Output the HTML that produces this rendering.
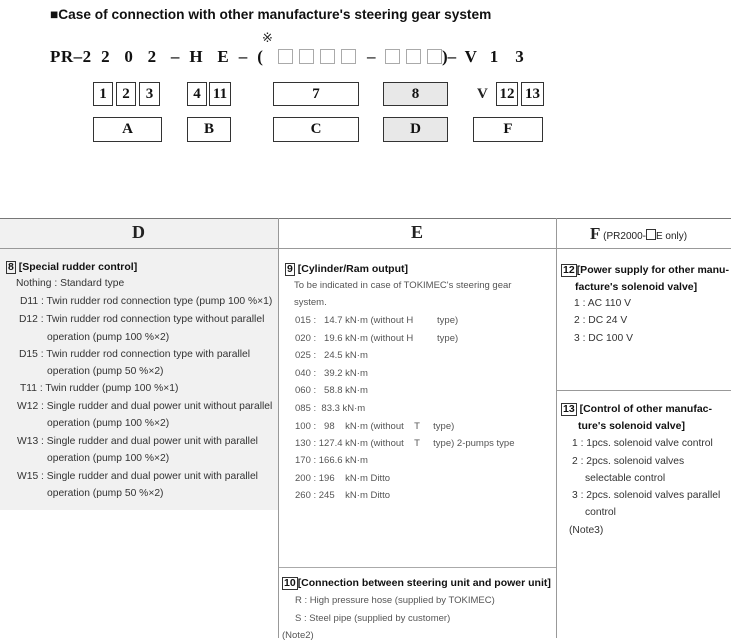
<!DOCTYPE html><html><head><meta charset="utf-8"><style>
body{margin:0;width:731px;height:638px;background:#fff;position:relative;overflow:hidden;font-family:"Liberation Sans",sans-serif;color:#222}
.a{position:absolute;white-space:nowrap}
.bx{position:absolute;border:1.5px solid #333;box-sizing:border-box;text-align:center;font-family:"Liberation Serif",serif;font-weight:bold;font-size:15px;color:#111}
.g{background:#e8e8e8}
.t{position:absolute;white-space:nowrap;font-size:10.3px;color:#333}
.b{font-weight:bold;font-size:10.5px;color:#111}
.n{display:inline-block;border:1px solid #333;padding:0 1px;font-weight:bold;line-height:11px}
.e{color:#555;font-size:9.5px}
.sq{position:absolute;top:49px;width:15px;height:15px;border:1.2px solid #aaa;box-sizing:border-box}
</style></head><body>
<div class="a" style="left:50px;top:7px;font-size:13.7px;font-weight:bold;color:#111">■Case of connection with other manufacture's steering gear system</div>
<div class="a" style="left:262px;top:30px;font-size:13px">※</div>
<div class="a" style="left:50px;top:47px;font-family:'Liberation Serif',serif;font-weight:bold;font-size:17px;color:#111;letter-spacing:0.5px">PR–2&nbsp; 2&nbsp;&nbsp; 0&nbsp;&nbsp; 2&nbsp;&nbsp; –&nbsp; H&nbsp;&nbsp; E&nbsp; –&nbsp; (</div>
<div class="sq" style="left:278px"></div><div class="sq" style="left:299px"></div><div class="sq" style="left:320px"></div><div class="sq" style="left:341px"></div>
<div class="a" style="left:367px;top:47px;font-family:'Liberation Serif',serif;font-weight:bold;font-size:17px">–</div>
<div class="sq" style="left:385px"></div><div class="sq" style="left:406px"></div><div class="sq" style="left:427px"></div>
<div class="a" style="left:442px;top:47px;font-family:'Liberation Serif',serif;font-weight:bold;font-size:17px;color:#111">)– &nbsp;V&nbsp;&nbsp; 1&nbsp;&nbsp;&nbsp; 3</div>
<div class="bx" style="left:93px;top:82px;width:20px;height:24px;line-height:22px">1</div>
<div class="bx" style="left:116px;top:82px;width:20px;height:24px;line-height:22px">2</div>
<div class="bx" style="left:139px;top:82px;width:21px;height:24px;line-height:22px">3</div>
<div class="bx" style="left:187px;top:82px;width:20px;height:24px;line-height:22px">4</div>
<div class="bx" style="left:209px;top:82px;width:22px;height:24px;line-height:22px">11</div>
<div class="bx" style="left:273px;top:82px;width:86px;height:24px;line-height:22px">7</div>
<div class="bx g" style="left:383px;top:82px;width:65px;height:24px;line-height:22px">8</div>
<div class="a" style="left:477px;top:86px;font-family:'Liberation Serif',serif;font-weight:bold;font-size:15px">V</div>
<div class="bx" style="left:496px;top:82px;width:22px;height:24px;line-height:22px">12</div>
<div class="bx" style="left:521px;top:82px;width:23px;height:24px;line-height:22px">13</div>
<div class="bx" style="left:93px;top:117px;width:69px;height:25px;line-height:23px">A</div>
<div class="bx" style="left:187px;top:117px;width:44px;height:25px;line-height:23px">B</div>
<div class="bx" style="left:273px;top:117px;width:86px;height:25px;line-height:23px">C</div>
<div class="bx g" style="left:383px;top:117px;width:65px;height:25px;line-height:23px">D</div>
<div class="bx" style="left:473px;top:117px;width:70px;height:25px;line-height:23px">F</div>

<div class="a" style="left:0;top:218px;width:278px;height:292px;background:#f1f1f1"></div>
<div class="a" style="left:0;top:218px;width:731px;height:1px;background:#777"></div>
<div class="a" style="left:0;top:248px;width:731px;height:1px;background:#999"></div>
<div class="a" style="left:278px;top:218px;width:1px;height:420px;background:#999"></div>
<div class="a" style="left:556px;top:218px;width:1px;height:420px;background:#999"></div>
<div class="a" style="left:556px;top:390px;width:175px;height:1px;background:#999"></div>
<div class="a" style="left:279px;top:567px;width:277px;height:1px;background:#aaa"></div>
<div class="a" style="left:132px;top:222px;font-family:'Liberation Serif',serif;font-weight:bold;font-size:18px">D</div>
<div class="a" style="left:411px;top:222px;font-family:'Liberation Serif',serif;font-weight:bold;font-size:18px">E</div>
<div class="a" style="left:590px;top:224px;font-size:10px"><b style="font-family:'Liberation Serif',serif;font-size:17px">F</b> (PR2000-<span style="display:inline-block;width:8px;height:9px;border:1px solid #333;vertical-align:-1px"></span>E only)</div>

<div class="t b" style="left:6px;top:261px"><span class="n">8</span> [Special rudder control]</div>
<div class="t" style="left:16px;top:278px">Nothing : Standard type</div>
<div class="t" style="left:20px;top:296px">D11 : Twin rudder rod connection type (pump 100 %×1)</div>
<div class="t" style="left:19px;top:314px">D12 : Twin rudder rod connection type without parallel</div>
<div class="t" style="left:47px;top:332px">operation (pump 100 %×2)</div>
<div class="t" style="left:19px;top:349px">D15 : Twin rudder rod connection type with parallel</div>
<div class="t" style="left:47px;top:366px">operation (pump 50 %×2)</div>
<div class="t" style="left:20px;top:383px">T11 : Twin rudder (pump 100 %×1)</div>
<div class="t" style="left:17px;top:401px">W12 : Single rudder and dual power unit without parallel</div>
<div class="t" style="left:47px;top:418px">operation (pump 100 %×2)</div>
<div class="t" style="left:17px;top:436px">W13 : Single rudder and dual power unit with parallel</div>
<div class="t" style="left:47px;top:453px">operation (pump 100 %×2)</div>
<div class="t" style="left:17px;top:471px">W15 : Single rudder and dual power unit with parallel</div>
<div class="t" style="left:47px;top:488px">operation (pump 50 %×2)</div>

<div class="t b" style="left:285px;top:263px"><span class="n">9</span> [Cylinder/Ram output]</div>
<div class="t e" style="left:294px;top:280px">To be indicated in case of TOKIMEC's steering gear</div>
<div class="t e" style="left:294px;top:297px">system.</div>
<div class="t e" style="left:295px;top:315px">015 :&nbsp;&nbsp; 14.7 kN·m (without H&nbsp;&nbsp;&nbsp;&nbsp;&nbsp;&nbsp;&nbsp;&nbsp; type)</div>
<div class="t e" style="left:295px;top:333px">020 :&nbsp;&nbsp; 19.6 kN·m (without H&nbsp;&nbsp;&nbsp;&nbsp;&nbsp;&nbsp;&nbsp;&nbsp; type)</div>
<div class="t e" style="left:295px;top:350px">025 :&nbsp;&nbsp; 24.5 kN·m</div>
<div class="t e" style="left:295px;top:368px">040 :&nbsp;&nbsp; 39.2 kN·m</div>
<div class="t e" style="left:295px;top:385px">060 :&nbsp;&nbsp; 58.8 kN·m</div>
<div class="t e" style="left:295px;top:403px">085 :&nbsp; 83.3 kN·m</div>
<div class="t e" style="left:295px;top:421px">100 :&nbsp;&nbsp; 98&nbsp;&nbsp;&nbsp; kN·m (without&nbsp;&nbsp;&nbsp; T&nbsp;&nbsp;&nbsp;&nbsp; type)</div>
<div class="t e" style="left:295px;top:438px">130 : 127.4 kN·m (without&nbsp;&nbsp;&nbsp; T&nbsp;&nbsp;&nbsp;&nbsp; type) 2-pumps type</div>
<div class="t e" style="left:295px;top:455px">170 : 166.6 kN·m</div>
<div class="t e" style="left:295px;top:473px">200 : 196&nbsp;&nbsp;&nbsp; kN·m Ditto</div>
<div class="t e" style="left:295px;top:490px">260 : 245&nbsp;&nbsp;&nbsp; kN·m Ditto</div>

<div class="t b" style="left:282px;top:577px"><span class="n">10</span>[Connection between steering unit and power unit]</div>
<div class="t e" style="left:295px;top:595px">R : High pressure hose (supplied by TOKIMEC)</div>
<div class="t e" style="left:295px;top:613px">S : Steel pipe (supplied by customer)</div>
<div class="t e" style="left:282px;top:630px">(Note2)</div>

<div class="t b" style="left:561px;top:264px"><span class="n">12</span>[Power supply for other manu-</div>
<div class="t b" style="left:575px;top:281px">facture's solenoid valve]</div>
<div class="t" style="left:574px;top:298px">1 : AC 110 V</div>
<div class="t" style="left:574px;top:315px">2 : DC 24 V</div>
<div class="t" style="left:574px;top:333px">3 : DC 100 V</div>
<div class="t b" style="left:561px;top:403px"><span class="n">13</span> [Control of other manufac-</div>
<div class="t b" style="left:578px;top:420px">ture's solenoid valve]</div>
<div class="t" style="left:572px;top:438px">1 : 1pcs. solenoid valve control</div>
<div class="t" style="left:572px;top:456px">2 : 2pcs. solenoid valves</div>
<div class="t" style="left:585px;top:473px">selectable control</div>
<div class="t" style="left:572px;top:490px">3 : 2pcs. solenoid valves parallel</div>
<div class="t" style="left:585px;top:507px">control</div>
<div class="t" style="left:569px;top:525px">(Note3)</div>
</body></html>
